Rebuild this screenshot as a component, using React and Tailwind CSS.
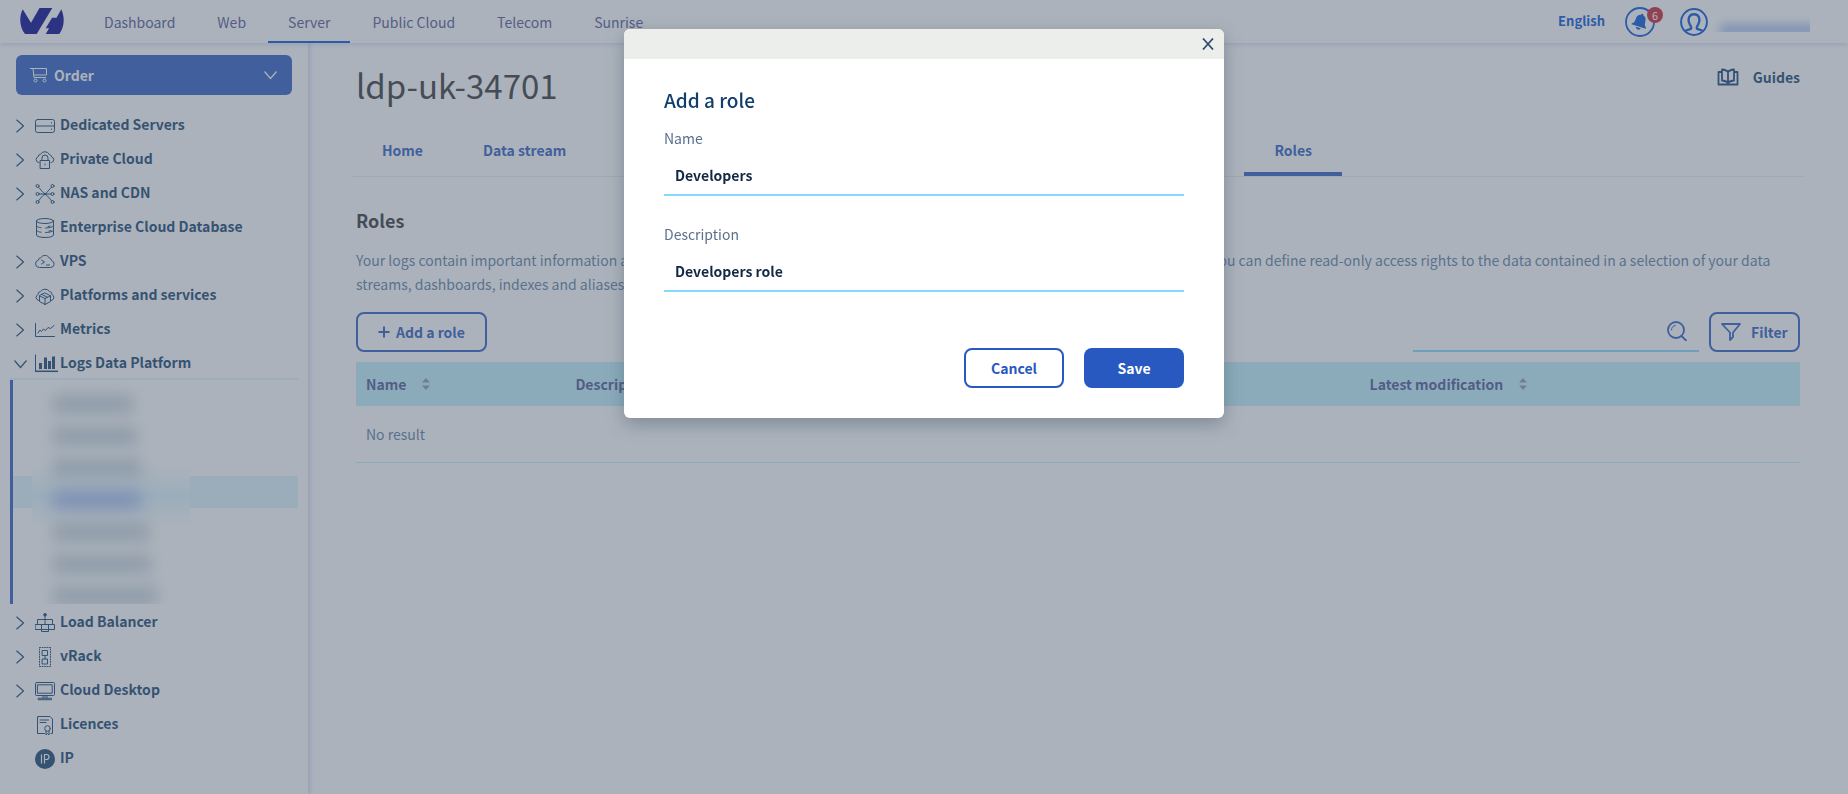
import React, { useState } from "react";

const NAV = ["Dashboard", "Web", "Server", "Public Cloud", "Telecom", "Sunrise"];

function Icon({ children, className = "size-5", width = 1 }) {
  return (
    <svg viewBox="0 0 20 20" className={className} fill="none" stroke="currentColor" strokeWidth={width} strokeLinecap="round" strokeLinejoin="round" aria-hidden="true">
      {children}
    </svg>
  );
}

const CLOUD = "M4.5 15.5a3.7 3.7 0 0 1-.6-7.3 2.8 2.8 0 0 1 2.3-2.5 5 5 0 0 1 8.4.7 3 3 0 0 1 2 2.600 3.400 3.400 0 0 1-.9 6.500z";

const ICONS = {
  server: (
    <Icon>
      <rect x="0.5" y="3.5" width="19" height="13" rx="2" />
      <path d="M.5 10h19M16.500 6.500v.5M16.500 13v.5" />
    </Icon>
  ),
  private: (
    <Icon>
      <path d="M4 12.500H3.500A3 3 0 0 1 3.200 6.700 2.500 2.500 0 0 1 5.500 4.300 5 5 0 0 1 14.400 4.600 2.800 2.800 0 0 1 16.700 6.900 2.900 2.900 0 0 1 16.500 12.500H16" />
      <path d="M5.500 10.500h9v8h-9zM7 10.500V8a3 3 0 0 1 6 0v2.500M10 14v1" />
    </Icon>
  ),
  nas: (
    <Icon>
      <path d="M4 10h12M3.500 3.200C6 5.500 7.500 8.500 10 10s4.500 4.500 6.500 6.800M16.500 3.200C14 5.500 12.500 8.500 10 10s-4.500 4.500-6.500 6.800" />
      <circle cx="2.500" cy="2" r="1.500" /><circle cx="17.500" cy="2" r="1.500" />
      <circle cx="2.500" cy="10" r="1.500" /><circle cx="17.500" cy="10" r="1.500" />
      <circle cx="2.500" cy="18" r="1.500" /><circle cx="17.500" cy="18" r="1.500" />
      <circle cx="10" cy="10" r="0.800" fill="currentColor" />
    </Icon>
  ),
  database: (
    <Icon>
      <ellipse cx="10" cy="3" rx="8.500" ry="2.500" />
      <path d="M1.500 3v14c0 3.300 17 3.300 17 0V3M1.500 8c1 1 2.500 1.500 4.500 1.700M1.500 12.500c1 1 2.500 1.500 4.500 1.700M10.500 10c3.500 0 6.500-.7 8-2M10.500 14.500c3.500 0 6.500-.7 8-2M13 8.500l2-.4M14 13l2-.4" />
    </Icon>
  ),
  vps: (
    <Icon>
      <path d="M4.200 15.500A3.700 3.700 0 0 1 3.400 8.200 2.700 2.700 0 0 1 5.800 5.700 5 5 0 0 1 14.400 6.100 3 3 0 0 1 16.700 8.700 3.500 3.500 0 0 1 16 15.500z" />
      <path d="M6.500 8 9.500 10 6.500 12M11.500 13h3" />
    </Icon>
  ),
  platforms: (
    <Icon>
      <path d="M3.500 14.500A3.200 3.200 0 0 1 3 8.500 3 3 0 0 1 5.500 5.500 5.500 5.500 0 0 1 14.500 5.500 3 3 0 0 1 17 8.500 3.200 3.200 0 0 1 16.500 14.500" />
      <path d="m10 7 5.500 2.800v5.700L10 18.500l-5.500-3V9.800zM4.500 9.800l5.500 2.700 5.500-2.700M10 12.500v6M7 8.500l5.500 2.800" />
    </Icon>
  ),
  metrics: (
    <Icon>
      <path d="M.5 3.500v13h19" />
      <path d="m3 13 2-3 1.500 1.500L8.500 9l2 1.500L13 7.500l2.500 1L19 5.500" />
    </Icon>
  ),
  logs: (
    <svg viewBox="0 0 23 20" className="h-5 w-[23px]" fill="none" stroke="currentColor" aria-hidden="true">
      <path d="M.5 .5V17.500" />
      <path d="M0 17.300H23" strokeWidth="1.500" />
      <path d="M5.500 15v-6M10.500 15V3.500M14.500 15V7M18.500 15V2.500" strokeWidth="3" />
    </svg>
  ),
  balancer: (
    <Icon>
      <circle cx="10" cy="1.800" r="1.300" fill="currentColor" />
      <path d="M10 2v9M2.500 10.500V6.500h15v4M.5 11.500h19v5H.5zM6.500 11.500v7h7v-7" />
    </Icon>
  ),
  vrack: (
    <Icon>
      <path d="M4.500.5h11v19h-11z" strokeDasharray="1 1.500" />
      <path d="M7.500 3.500h5v5h-5zM7.500 12h5v5h-5zM10 8.500v3.500" />
    </Icon>
  ),
  desktop: (
    <Icon>
      <rect x="0.500" y="1.500" width="19" height="13" rx="1" />
      <path d="M2.800 3.800h14.400v8.400H2.800zM8 14.500v3M12 14.500v3M10 14.500v2M3.500 17.200h13v1.500h-13z" />
    </Icon>
  ),
  licences: (
    <Icon>
      <path d="M9.500 18.500H2.500V1.500h12.500l2.500 2.500v14.500H16M5 5h8.500M5 7.500h6" />
      <circle cx="12.500" cy="13.500" r="2.800" />
      <path d="M11 16v4l1.500-1.500L14 20v-4" />
    </Icon>
  ),
  ip: (
    <svg viewBox="0 0 20 20" className="size-5" aria-hidden="true">
      <circle cx="10" cy="10" r="10" fill="currentColor" />
      <path d="M6.500 5.500v9M9.500 14.500v-9h2a2.400 2.400 0 0 1 0 5h-2" fill="none" stroke="#fff" strokeWidth="1.200" />
    </svg>
  ),
};

const TOP_ITEMS = [
  ["server", "Dedicated Servers", true],
  ["private", "Private Cloud", true],
  ["nas", "NAS and CDN", true],
  ["database", "Enterprise Cloud Database", false],
  ["vps", "VPS", true],
  ["platforms", "Platforms and services", true],
  ["metrics", "Metrics", true],
];

const BOTTOM_ITEMS = [
  ["balancer", "Load Balancer", true],
  ["vrack", "vRack", true],
  ["desktop", "Cloud Desktop", true],
  ["licences", "Licences", false],
  ["ip", "IP", false],
];

const HIDDEN_NAMES = ["w-20", "w-[84px]", "w-[88px]", "w-[88px]", "w-[96px]", "w-[98px]", "w-[104px]"];

function Chevron({ open = false }) {
  return (
    <svg viewBox="0 0 14 14" className="size-3.5 shrink-0" fill="none" stroke="currentColor" strokeWidth="1.200" aria-hidden="true">
      {open ? <path d="M.5 3.500 6.500 10.500l6-7" /> : <path d="M2.500 .8 9.500 7l-7 6.200" />}
    </svg>
  );
}

function SideItem({ icon, label, expandable, open }) {
  return (
    <a href="#" className="flex h-[34px] items-center pl-3.5 font-bold text-[#113f6d]">
      <span className="flex w-[21px] shrink-0 pt-1">{expandable && <Chevron open={open} />}</span>
      <span className="flex w-[25px] shrink-0 pt-1">{ICONS[icon]}</span>
      <span className="whitespace-nowrap">{label}</span>
    </a>
  );
}

function SortIcon() {
  return (
    <svg viewBox="0 0 8 12" className="h-3 w-2" fill="#8599aa" aria-hidden="true">
      <path d="M4 0 8 4.500H0zM4 12 0 7.500h8z" />
    </svg>
  );
}

function Header() {
  return (
    <header className="relative z-10 flex h-[43px] shrink-0 items-stretch bg-white shadow-[0_0_6px_rgba(0,14,156,0.25)]">
      <a href="#" aria-label="OVHcloud" className="flex w-[84px] items-center pl-5 pb-px text-[#00018f]">
        <svg viewBox="0 0 44 26" className="h-[26px] w-11" fill="currentColor" aria-hidden="true">
          <path d="M2.700 1.300 11 14.700 19.500 0h12.800L16.700 26H5C-.3 19.500-1.300 9.500 2.700 1.300zM41.300 1.300C45 9.500 44.500 19 39.300 26H25.700l3.400-5.700h-3.400L32 9.700h4.500z" />
        </svg>
      </a>
      <nav className="flex gap-0.5" aria-label="Universes">
        {NAV.map((item) => (
          <a key={item} href="#" className={item === "Server" ? "flex items-center border-b-2 border-[#0050d7] px-5 pt-0.5 text-[#4d5592]" : "flex items-center border-b-2 border-transparent px-5 pt-0.5 text-[#4d5592]"}>
            {item}
          </a>
        ))}
      </nav>
      <div className="ml-auto flex items-center pr-[38px] text-[#0050d7]">
        <button type="button" className="mr-5 text-[13px] font-bold">English</button>
        <button type="button" aria-label="Notifications" className="relative mr-[25px]">
          <svg viewBox="0 0 30 30" className="size-[30px]" aria-hidden="true">
            <circle cx="15" cy="15" r="14" fill="none" stroke="currentColor" strokeWidth="1.800" />
            <g fill="currentColor" transform="rotate(17 15 15)">
              <path d="M15 6.500a1.200 1.200 0 0 1 1.200 1.200c2.500.6 3.800 2.600 3.800 5.300 0 3 .5 4.300 2.500 5.800v.9h-15v-.9c2-1.500 2.500-2.800 2.500-5.800 0-2.700 1.300-4.700 3.800-5.300A1.200 1.200 0 0 1 15 6.500z" />
              <path d="M12.500 20.800h5a2.500 2 0 0 1-5 0z" />
            </g>
          </svg>
          <span className="absolute -right-2 top-0 flex size-4 items-center justify-center rounded-full bg-[#c81f2d] text-[11px] leading-4 text-white">6</span>
        </button>
        <button type="button" aria-label="My account" className="flex items-center">
          <svg viewBox="0 0 28 28" className="size-7" fill="none" stroke="currentColor" aria-hidden="true">
            <circle cx="14" cy="14" r="12.900" strokeWidth="2" />
            <path d="M5.500 23c1.500-1.500 4-1.200 5.500-2.300.9-1-.3-2.700-1.200-4.200C7.300 12 8.500 6.200 14 6.200s6.700 5.800 4.200 10.300c-.9 1.500-2.100 3.200-1.200 4.200 1.500 1.100 4 .8 5.500 2.300" strokeWidth="2.400" />
          </svg>
          <span className="ml-1 flex h-5 w-[98px] items-end overflow-hidden">
            <span className="-mr-2 -mb-1 ml-2 h-3 w-full bg-[#6f97e3]/60 blur-[5px]" />
          </span>
        </button>
      </div>
    </header>
  );
}

function Sidebar() {
  return (
    <aside className="w-[308px] shrink-0 bg-white pt-3 shadow-[2px_0_5px_rgba(0,14,156,0.18)]">
      <div className="px-4">
        <button type="button" className="flex h-10 w-full items-center rounded-md bg-[#2859c0] px-3.5 font-semibold text-white">
          <svg viewBox="0 0 18 16" className="h-4 w-[18px]" fill="none" stroke="currentColor" aria-hidden="true">
            <path d="M0 1.500h3l1 9h12M3 1.500h13.500v6.500h-13" />
            <circle cx="5.500" cy="13.500" r="1.500" /><circle cx="14.500" cy="13.500" r="1.500" />
          </svg>
          <span className="ml-1.5">Order</span>
          <span className="ml-auto"><Chevron open /></span>
        </button>
      </div>
      <nav className="mt-3" aria-label="Products">
        {TOP_ITEMS.map(([icon, label, more]) => (
          <SideItem key={label} icon={icon} label={label} expandable={more} />
        ))}
        <div className="mr-2.5 ml-2.5 border-b-2 border-[#def5fd]">
          <div className="-ml-2.5 flex h-[33px] items-center">
            <SideItem icon="logs" label="Logs Data Platform" expandable open />
          </div>
        </div>
        <ul className="mr-2.5 ml-2.5 overflow-hidden border-l-3 border-[#2859c0]" aria-hidden="true">
          {HIDDEN_NAMES.map((w, i) => (
            <li key={i} className={i === 3 ? "relative flex h-8 items-end bg-[#def5fd] pl-10" : "flex h-8 items-end pl-10"}>
              {i === 3 && (
                <span className="absolute -top-3 -bottom-5 left-[19px] w-[158px] bg-linear-to-b from-white via-[#def5fd] to-white" />
              )}
              <span className={`${w} relative z-10 h-4 blur-[8px] ${i === 3 ? "bg-[#9db4ee]" : "bg-[#bccbd6]"}`} />
            </li>
          ))}
        </ul>
        {BOTTOM_ITEMS.map(([icon, label, more]) => (
          <SideItem key={label} icon={icon} label={label} expandable={more} />
        ))}
      </nav>
    </aside>
  );
}

function Main() {
  return (
    <main className="min-w-0 flex-1 px-12">
      <div className="flex items-start justify-between">
        <h1 className="pt-3.5 text-[33px] leading-[56px] text-[#333]">ldp-uk-34701</h1>
        <button type="button" className="flex items-center gap-3.5 pt-[22px] leading-6 font-semibold text-[#113f6d]">
          <svg viewBox="0 0 22 18" className="h-[18px] w-[22px]" fill="none" stroke="currentColor" strokeWidth="1.800" strokeLinejoin="round" aria-hidden="true">
            <path d="M5 4H1.500v12.500h19V4H17M11 4v11M5 1.500c3 .3 5 1 6 2.500 1-1.500 3-2.200 6-2.500v11c-3 .3-5 1-6 2.500-1-1.500-3-2.200-6-2.500z" />
          </svg>
          Guides
        </button>
      </div>
      <div className="-mx-1 mt-2.5 flex h-[54px] items-stretch border-b border-[#def0fa] font-semibold text-[#2859c0]" role="tablist">
        <button type="button" role="tab" className="px-[30px]">Home</button>
        <button type="button" role="tab" className="px-[30px]">Data stream</button>
        <button type="button" role="tab" aria-selected="true" className="mr-[462px] ml-auto border-b-4 border-[#2859c0] px-[30px] pt-1">Roles</button>
      </div>
      <h2 className="mt-[31px] text-lg leading-6 font-bold text-[#333]">Roles</h2>
      <p className="mt-4 leading-6 text-[#5b7ca3]">
        Your logs contain important information about your activity that you may want to share with your internal or external collaborators. You can define read-only access rights to the data contained in a selection of your data streams, dashboards, indexes and aliases.
      </p>
      <div className="mt-4 flex h-10 justify-between">
        <button type="button" className="flex items-center gap-1.5 rounded-lg border-2 border-[#2859c0] px-5 font-semibold text-[#2859c0]">
          <svg viewBox="0 0 12 12" className="size-3" fill="none" stroke="currentColor" strokeWidth="2" aria-hidden="true"><path d="M6 .5v11M.5 6h11" /></svg>
          Add a role
        </button>
        <div className="flex gap-2.5 text-[#2859c0]">
          <div className="flex w-[286px] items-center border-b-2 border-[#85d9fd]">
            <input type="search" aria-label="Search roles" className="min-w-0 flex-1 bg-transparent outline-none" />
            <button type="button" aria-label="Search" className="mr-3">
              <Icon width={1.8}>
                <circle cx="9" cy="9" r="8" /><path d="M14.500 15 19 19.500" /><path d="M4.500 9A4.500 4.500 0 0 1 8.500 4.500" strokeWidth="1" />
              </Icon>
            </button>
          </div>
          <button type="button" className="flex w-[91px] items-center gap-2.5 rounded-lg border-2 border-[#2859c0] pl-2.5 font-semibold">
            <svg viewBox="0 0 20 18" className="h-[18px] w-5" fill="none" stroke="currentColor" strokeWidth="1.800" strokeLinejoin="round" aria-hidden="true"><path d="M1 1h18l-7 8.500v4.500l-3 3V9.500z" /></svg>
            Filter
          </button>
        </div>
      </div>
      <table className="mt-2.5 w-full table-fixed text-left">
        <colgroup><col className="w-[14.500%]" /><col className="w-[55%]" /><col /></colgroup>
        <thead>
          <tr className="h-11 bg-[#bef1ff] text-[#4d5592]">
            <th className="px-2.5"><span className="flex items-center gap-4">Name<SortIcon /></span></th>
            <th className="px-2.5">Description</th>
            <th className="px-2.5"><span className="flex items-center gap-4">Latest modification<SortIcon /></span></th>
          </tr>
        </thead>
        <tbody>
          <tr className="h-14 border-b border-[#bef1ff] text-[#5b7ca3]">
            <td className="px-2.5" colSpan={3}>No result</td>
          </tr>
        </tbody>
      </table>
    </main>
  );
}

function Field({ id, label, value, onChange, className }) {
  return (
    <div className={className}>
      <label htmlFor={id} className="block leading-6 text-[#5b6f8d]">{label}</label>
      <input id={id} value={value} onChange={(e) => onChange(e.target.value)} className="mt-1.5 block h-10 w-full border-b-2 border-[#85d9fd] bg-white px-[11px] font-semibold text-[#122844] outline-none" />
    </div>
  );
}

function RoleDialog() {
  const [name, setName] = useState("Developers");
  const [description, setDescription] = useState("Developers role");
  return (
    <div className="fixed inset-0 z-20 flex items-start justify-center bg-[#576577]/50 pt-[29px]">
      <form role="dialog" aria-modal="true" aria-labelledby="dialog-title" onSubmit={(e) => e.preventDefault()} className="w-[600px] overflow-hidden rounded-md bg-white shadow-[0_6px_18px_rgba(60,80,100,0.4)]">
        <div className="flex h-[30px] items-center justify-end bg-[#ebeeeb] pr-2.5 text-[#33526f]">
          <button type="button" aria-label="Close">
            <svg viewBox="0 0 12 12" className="size-3" fill="none" stroke="currentColor" strokeWidth="1.800" aria-hidden="true"><path d="m1 .5 10 11M11 .5l-10 11" /></svg>
          </button>
        </div>
        <div className="px-10 pt-[27px] pb-[30px]">
          <h2 id="dialog-title" className="text-[19px] leading-7 font-medium text-[#113f6d]">Add a role</h2>
          <Field id="role-name" label="Name" value={name} onChange={setName} className="mt-3" />
          <Field id="role-description" label="Description" value={description} onChange={setDescription} className="mt-[26px]" />
          <div className="mt-14 flex justify-end gap-5">
            <button type="button" className="h-10 w-[100px] rounded-lg border-2 border-[#2859c0] bg-white font-semibold text-[#2859c0]">Cancel</button>
            <button type="submit" className="h-10 w-[100px] rounded-lg bg-[#2859c0] font-semibold text-white">Save</button>
          </div>
        </div>
      </form>
    </div>
  );
}

export default function App() {
  return (
    <div className="flex min-h-screen flex-col bg-white font-['Noto_Sans_CJK_SC','Noto_Sans',sans-serif] text-sm">
      <Header />
      <div className="flex flex-1">
        <Sidebar />
        <Main />
      </div>
      <RoleDialog />
    </div>
  );
}
